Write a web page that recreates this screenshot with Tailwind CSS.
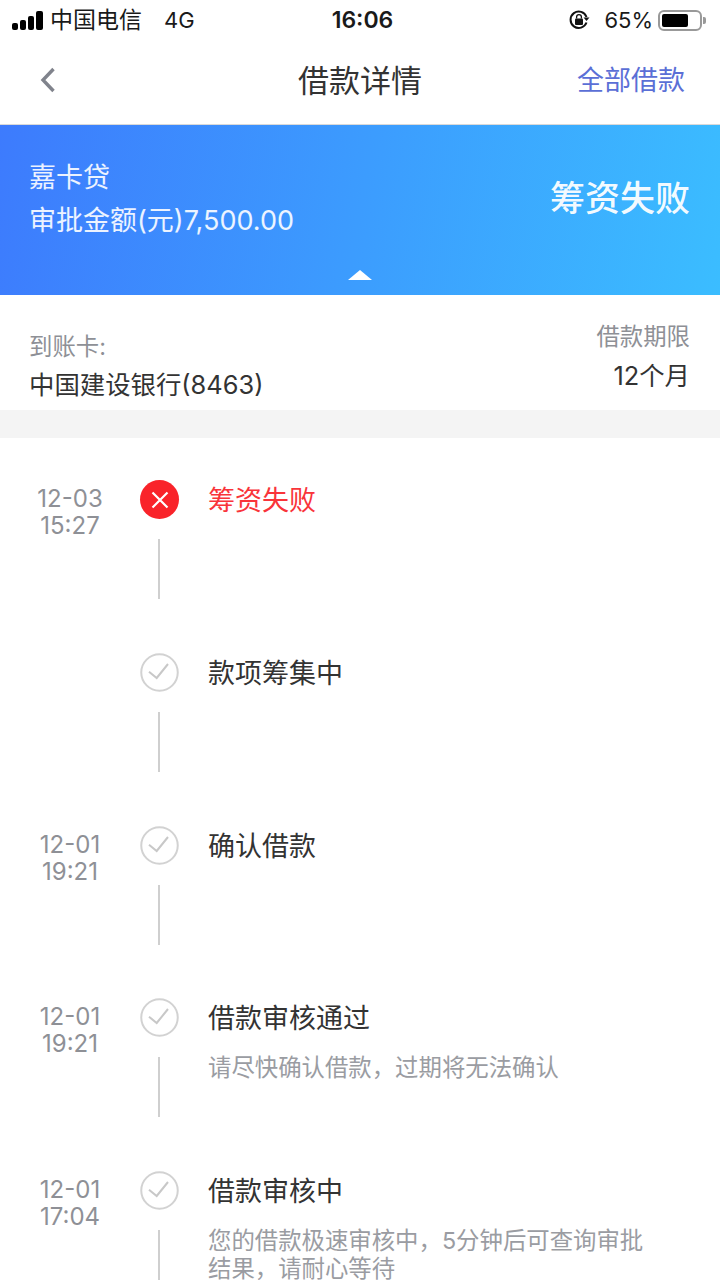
<!DOCTYPE html>
<html lang="zh">
<head>
    <meta charset="UTF-8">
    <meta name="viewport" content="width=device-width, initial-scale=1.0">
    <title>借款详情</title>
    <script src="https://cdn.jsdelivr.net/npm/@tailwindcss/browser@4"></script>
</head>
<body class="font-['Inter','Noto_Sans_CJK_SC',sans-serif] bg-white">
<div class="w-[720px] h-[1280px] overflow-hidden">
    <!-- Status bar -->
    <div class="h-[40px] flex items-center justify-between text-[22px] text-[#1a1a1a] relative">
        <div class="flex items-center pl-[12px]">
            <div class="flex items-end gap-[2px] mr-[7px]">
                <span class="w-[6px] h-[7px] bg-black rounded-[2px]"></span>
                <span class="w-[6px] h-[10px] bg-black rounded-[2px]"></span>
                <span class="w-[6px] h-[14px] bg-black rounded-[2px]"></span>
                <span class="w-[7px] h-[19px] bg-black rounded-[2px]"></span>
            </div>
            <span class="text-[23px]">中国电信</span>
            <span class="ml-[22px]">4G</span>
        </div>
        <div class="absolute left-0 w-[725px] text-center font-semibold text-[23px] pointer-events-none">16:06</div>
        <div class="flex items-center pr-[14px]">
            <svg class="w-[22px] h-[22px] mr-[14px]" viewBox="0 0 22 22" fill="none">
                <path d="M18.5 13.5A8.2 8.2 0 1 1 18.5 8" stroke="#111" stroke-width="2"/>
                <path d="M15.5 8.5h6l-3 3.5z" fill="#111"/>
                <rect x="7" y="9.5" width="8" height="6.5" rx="1" fill="#111"/>
                <path d="M8.6 9.5V8a2.4 2.4 0 0 1 4.8 0v1.500" stroke="#111" stroke-width="1.300"/>
            </svg>
            <span class="mr-[5px]">65%</span>
            <div class="w-[44px] h-[21px] border-2 border-[#999] rounded-[6px] p-[2px]">
                <div class="w-[26px] h-full bg-black rounded-[2px]"></div>
            </div>
            <div class="w-[3px] h-[7px] bg-[#999] rounded-r-[2px] ml-[1px]"></div>
        </div>
    </div>

    <!-- Nav -->
    <div class="h-[85px] border-b border-[#d9d9d9] flex items-center justify-between relative">
        <svg class="w-[18px] h-[26px] ml-[39px] mb-[5px]" viewBox="0 0 18 26" fill="none">
            <path d="M14.500 2L4 13l10.500 11" stroke="#80838c" stroke-width="3.400"/>
        </svg>
        <div class="absolute left-0 w-full text-center text-[31px] text-[#333] mb-[2px]">借款详情</div>
        <div class="text-[27px] text-[#5b6fd6] mr-[35px] mb-[2px]">全部借款</div>
    </div>

    <!-- Banner -->
    <div class="h-[170px] bg-[linear-gradient(100deg,#3d7bfd,#3bbdff)] relative flex justify-between items-start text-white">
        <div class="pl-[29px] pt-[35px]">
            <div class="text-[27px] leading-[36px] text-white/90">嘉卡贷</div>
            <div class="text-[27px] leading-[36px] mt-[7px] text-white/90">审批金额(元)7,500.00</div>
        </div>
        <div class="text-[35px] font-medium pr-[30px] pt-[49px] leading-[48px] text-white/95">筹资失败</div>
        <div class="absolute left-[348px] bottom-[15px] w-0 h-0 border-x-[12px] border-x-transparent border-b-[10px] border-b-white"></div>
    </div>

    <!-- Card info -->
    <div class="h-[115px] flex justify-between pl-[29px] pr-[30px]">
        <div class="pt-[37px]">
            <div class="text-[23.4px] leading-[30px] text-[#8e9096]">到账卡:</div>
            <div class="text-[25.4px] leading-[34px] mt-[6px] text-[#333]">中国建设银行(8463)</div>
        </div>
        <div class="pt-[27px] text-right">
            <div class="text-[23.4px] leading-[30px] text-[#8e9096]">借款期限</div>
            <div class="text-[25.4px] leading-[34px] mt-[7px] text-[#333]">12个月</div>
        </div>
    </div>
    <div class="h-[28px] bg-[#f4f4f4]"></div>

    <!-- Timeline -->
    <div class="pt-[42px]">
        <div class="h-[173px] flex">
            <div class="w-[140px] pl-[30px]">
                <div class="w-[80px] text-center text-[24px] leading-[27px] text-[#8e9096] pt-[5px]">12-03<br>15:27</div>
            </div>
            <div class="w-[39px] flex flex-col">
                <div class="w-[39px] h-[39px] rounded-full bg-[#f9232a] flex items-center justify-center">
                    <svg class="w-[18px] h-[18px]" viewBox="0 0 18 18" fill="none"><path d="M1.500 1.500l15 15M16.500 1.500l-15 15" stroke="#fff" stroke-width="2.200"/></svg>
                </div>
                <div class="w-[2px] h-[60px] bg-[#cfcfcf] mt-[20px] ml-[18px]"></div>
            </div>
            <div class="pl-[29px] pt-[2px] text-[27px] leading-[38px] text-[#f9343a]">筹资失败</div>
        </div>

        <div class="h-[173px] flex">
            <div class="w-[140px]"></div>
            <div class="w-[39px] flex flex-col">
                <svg class="w-[39px] h-[39px]" viewBox="0 0 39 39" fill="none"><circle cx="19.500" cy="19.500" r="18.250" stroke="#d2d2d2" stroke-width="2"/><path d="M9 18.700l7.700 6.300L28 11" stroke="#c8c8c8" stroke-width="2"/></svg>
                <div class="w-[2px] h-[60px] bg-[#cfcfcf] mt-[20px] ml-[18px]"></div>
            </div>
            <div class="pl-[29px] pt-[2px] text-[27px] leading-[38px] text-[#333]">款项筹集中</div>
        </div>

        <div class="h-[172px] flex">
            <div class="w-[140px] pl-[30px]">
                <div class="w-[80px] text-center text-[24px] leading-[27px] text-[#8e9096] pt-[5px]">12-01<br>19:21</div>
            </div>
            <div class="w-[39px] flex flex-col">
                <svg class="w-[39px] h-[39px]" viewBox="0 0 39 39" fill="none"><circle cx="19.500" cy="19.500" r="18.250" stroke="#d2d2d2" stroke-width="2"/><path d="M9 18.700l7.700 6.300L28 11" stroke="#c8c8c8" stroke-width="2"/></svg>
                <div class="w-[2px] h-[60px] bg-[#cfcfcf] mt-[20px] ml-[18px]"></div>
            </div>
            <div class="pl-[29px] pt-[2px] text-[27px] leading-[38px] text-[#333]">确认借款</div>
        </div>

        <div class="h-[173px] flex">
            <div class="w-[140px] pl-[30px]">
                <div class="w-[80px] text-center text-[24px] leading-[27px] text-[#8e9096] pt-[5px]">12-01<br>19:21</div>
            </div>
            <div class="w-[39px] flex flex-col">
                <svg class="w-[39px] h-[39px]" viewBox="0 0 39 39" fill="none"><circle cx="19.500" cy="19.500" r="18.250" stroke="#d2d2d2" stroke-width="2"/><path d="M9 18.700l7.700 6.300L28 11" stroke="#c8c8c8" stroke-width="2"/></svg>
                <div class="w-[2px] h-[60px] bg-[#cfcfcf] mt-[20px] ml-[18px]"></div>
            </div>
            <div class="pl-[29px] pt-[2px]">
                <div class="text-[27px] leading-[38px] text-[#333]">借款审核通过</div>
                <div class="text-[23.4px] leading-[28px] text-[#9a9ca2] mt-[16px]">请尽快确认借款，过期将无法确认</div>
            </div>
        </div>

        <div class="h-[173px] flex">
            <div class="w-[140px] pl-[30px]">
                <div class="w-[80px] text-center text-[24px] leading-[27px] text-[#8e9096] pt-[5px]">12-01<br>17:04</div>
            </div>
            <div class="w-[39px] flex flex-col">
                <svg class="w-[39px] h-[39px]" viewBox="0 0 39 39" fill="none"><circle cx="19.500" cy="19.500" r="18.250" stroke="#d2d2d2" stroke-width="2"/><path d="M9 18.700l7.700 6.300L28 11" stroke="#c8c8c8" stroke-width="2"/></svg>
                <div class="w-[2px] h-[60px] bg-[#cfcfcf] mt-[20px] ml-[18px]"></div>
            </div>
            <div class="pl-[29px] pt-[2px]">
                <div class="text-[27px] leading-[38px] text-[#333]">借款审核中</div>
                <div class="w-[450px] text-[23.4px] leading-[28px] text-[#9a9ca2] mt-[16px]">您的借款极速审核中，5分钟后可查询审批结果，请耐心等待</div>
            </div>
        </div>
    </div>
</div>
</body>
</html>
